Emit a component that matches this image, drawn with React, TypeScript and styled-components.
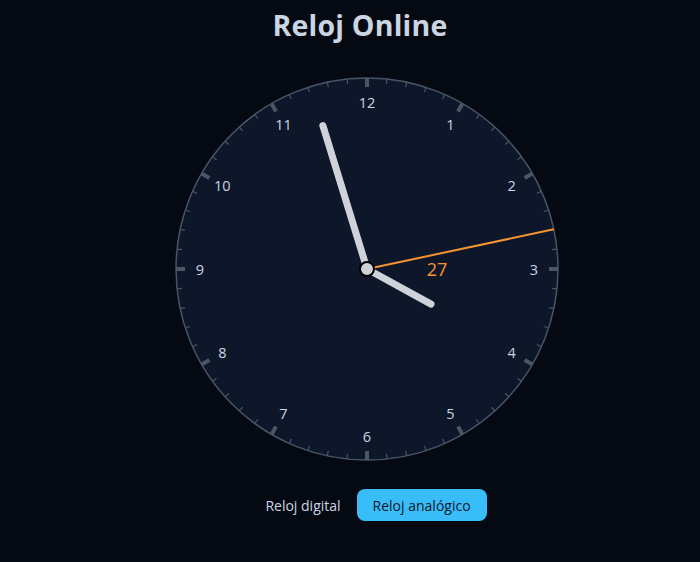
import React from "react";
import styled, { createGlobalStyle } from "styled-components";

const GlobalStyle = createGlobalStyle`
  html, body {
    margin: 0;
    padding: 0;
    background: #050912;
    font-family: "Open Sans", "Noto Sans", sans-serif;
  }
`;

const SPage = styled.div`
  width: 700px;
  height: 562px;
  box-sizing: border-box;
  padding: 6px 0 0 20px;
  display: flex;
  flex-direction: column;
  align-items: center;
`;

const STitle = styled.h1`
  margin: 0;
  font-size: 28.5px;
  line-height: 38px;
  font-weight: 700;
  letter-spacing: 0.2px;
  color: #cbd5e1;
`;

const SClock = styled.svg`
  display: block;
  margin: 29px 0 0 14px;
`;

const STabs = styled.div`
  display: flex;
  align-items: center;
  gap: 14px;
  margin: 24px 0 0 30px;
`;

interface ITab {
  active?: boolean;
}

const STab = styled.button<ITab>`
  border: none;
  border-radius: 8px;
  height: 32px;
  padding: 0 ${({ active }) => (active ? "16px" : "2px")};
  font-family: "Open Sans", "Noto Sans", sans-serif;
  font-size: 14px;
  background: ${({ active }) => (active ? "#38bdf8" : "transparent")};
  color: ${({ active }) => (active ? "#0f172a" : "#cbd5e1")};
  cursor: pointer;
`;

const C = 196;
const R = 191;

const polar = (deg: number, r: number) => {
  const a = ((deg - 90) * Math.PI) / 180;
  return { x: C + r * Math.cos(a), y: C + r * Math.sin(a) };
};

const Ticks = () => (
  <>
    {Array.from({ length: 60 }, (_, i) => {
      const major = i % 5 === 0;
      const p1 = polar(i * 6, R);
      const p2 = polar(i * 6, R - (major ? 9 : 5));
      return (
        <line
          key={i}
          x1={p1.x}
          y1={p1.y}
          x2={p2.x}
          y2={p2.y}
          stroke={major ? "#4b5563" : "#475569"}
          strokeWidth={major ? 4 : 1.2}
        />
      );
    })}
  </>
);

const Numbers = () => (
  <>
    {Array.from({ length: 12 }, (_, i) => {
      const n = i + 1;
      const p = polar(n * 30, 167);
      return (
        <text
          key={n}
          x={p.x}
          y={p.y}
          textAnchor="middle"
          dominantBaseline="central"
          fill="#c9d4e2"
          fontSize="14.5"
          fontFamily='"Open Sans", "Noto Sans", sans-serif'
        >
          {n}
        </text>
      );
    })}
  </>
);

const App = () => {
  const hour = polar(118.7, 73);
  const minute = polar(342.9, 150);
  const second = polar(78, R);

  return (
    <SPage>
      <GlobalStyle />
      <STitle>Reloj Online</STitle>
      <SClock width={392} height={392} viewBox="0 0 392 392">
        <circle cx={C} cy={C} r={R} fill="#0e172a" stroke="#475569" strokeWidth={1.5} />
        <Ticks />
        <Numbers />
        <line x1={C} y1={C} x2={hour.x} y2={hour.y} stroke="#cfd3d9" strokeWidth={7} strokeLinecap="round" />
        <line x1={C} y1={C} x2={minute.x} y2={minute.y} stroke="#cfd3d9" strokeWidth={7} strokeLinecap="round" />
        <line x1={C} y1={C} x2={second.x} y2={second.y} stroke="#f59332" strokeWidth={2} />
        <text
          x={C + 70}
          y={C}
          textAnchor="middle"
          dominantBaseline="central"
          fill="#f59332"
          fontSize="18"
          fontFamily='"Open Sans", "Noto Sans", sans-serif'
        >
          27
        </text>
        <circle cx={C} cy={C} r={7} fill="#cfd3d9" stroke="#000" strokeWidth={2} />
      </SClock>
      <STabs>
        <STab>Reloj digital</STab>
        <STab active>Reloj analógico</STab>
      </STabs>
    </SPage>
  );
};

export default App;
